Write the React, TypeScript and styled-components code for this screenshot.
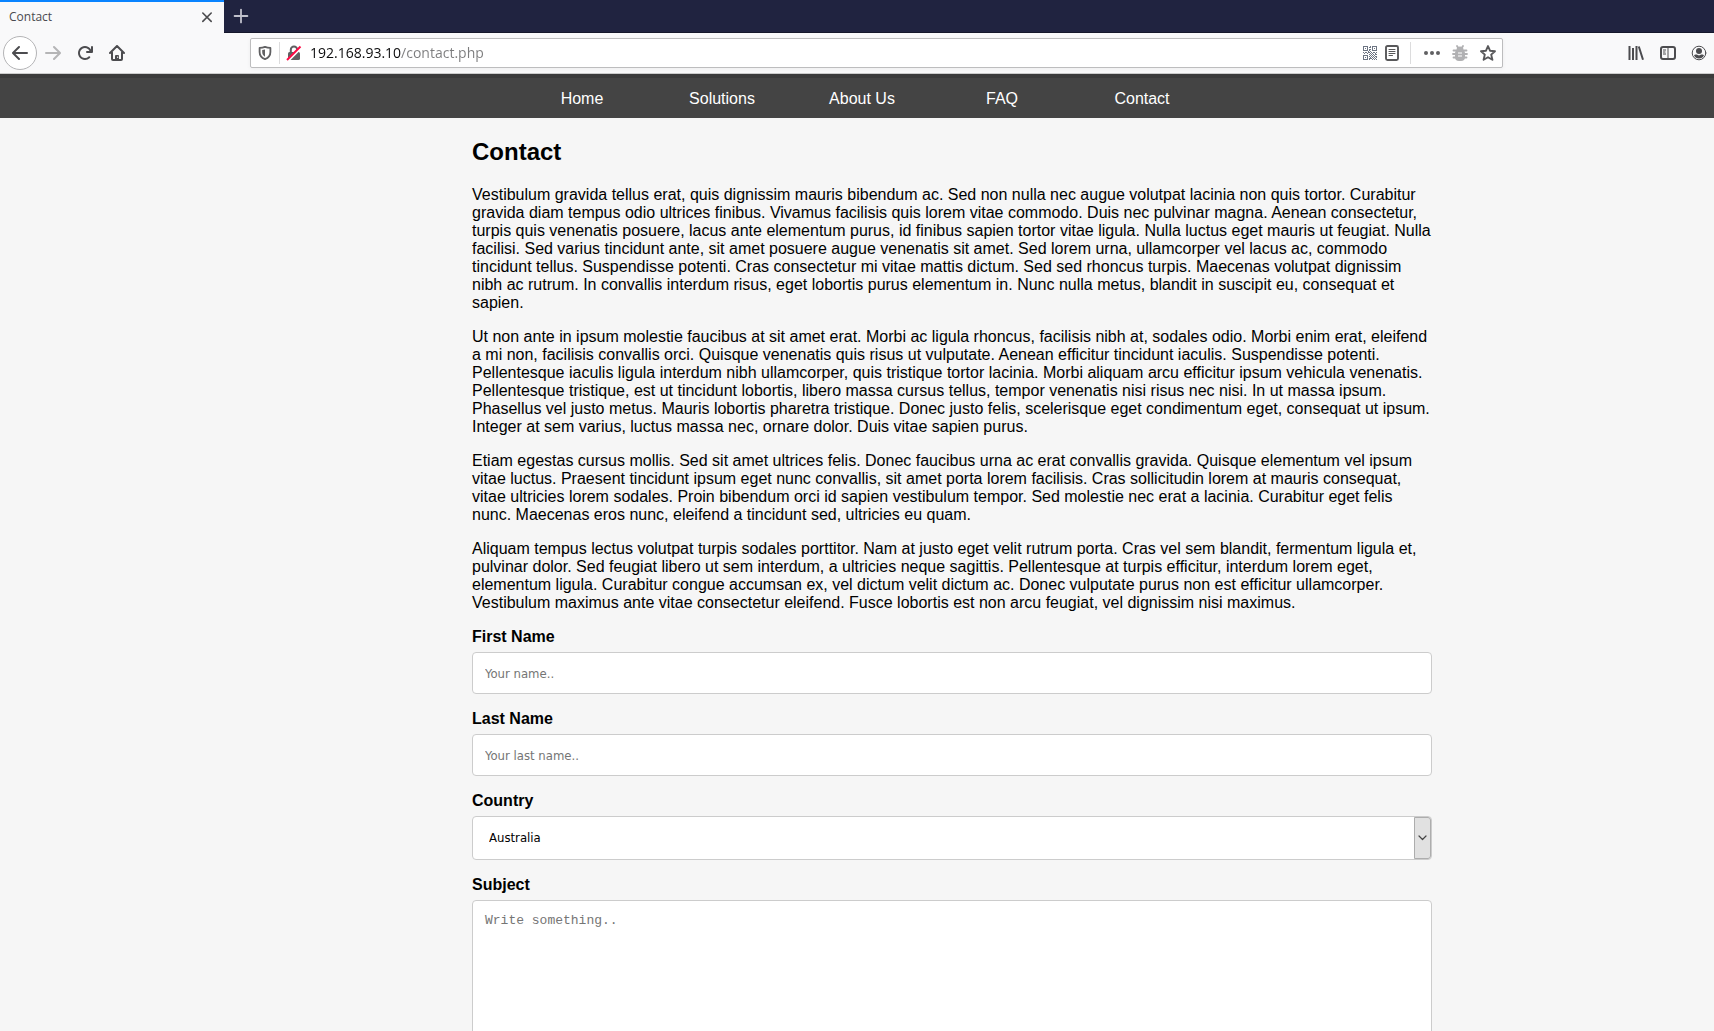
import React from "react";
import styled, { createGlobalStyle } from "styled-components";

const GlobalStyle = createGlobalStyle`
  *, *::before, *::after { box-sizing: border-box; }
  body { margin: 0; background: #f6f6f6; }
`;

const ui = `"Open Sans", "Noto Sans", sans-serif`;
const sans = `"Liberation Sans", Arial, sans-serif`;
const field = `"DejaVu Sans Condensed", "Noto Sans", sans-serif`;

const Window = styled.div`
  display: flex;
  flex-direction: column;
  height: 100vh;
  overflow: hidden;
`;

const TabStrip = styled.div`
  display: flex;
  flex: none;
  height: 33px;
  background: #202340;
  border-bottom: 1px solid #15172b;
`;

const Tab = styled.div`
  display: flex;
  align-items: center;
  justify-content: space-between;
  width: 224px;
  height: 33px;
  padding: 0 9px 2px;
  border-top: 2px solid #0a84ff;
  background: #f9f9fa;
  color: #4a4a4f;
  font: 12px/16px ${ui};
`;

const IconButton = styled.button<{ $size?: number; $color?: string }>`
  display: flex;
  align-items: center;
  justify-content: center;
  flex: none;
  width: ${(p) => p.$size ?? 32}px;
  height: ${(p) => Math.min(p.$size ?? 32, 32)}px;
  padding: 0;
  border: 0;
  background: none;
  color: ${(p) => p.$color ?? "#4c4c4f"};
`;

const BackButton = styled(IconButton)`
  width: 34px;
  height: 34px;
  border: 1px solid #b4b4b6;
  border-radius: 50%;
  background: #fff;
`;

const Toolbar = styled.div`
  display: flex;
  align-items: center;
  flex: none;
  height: 41px;
  padding: 0 0 0 3px;
  border-bottom: 1px solid #ccc;
  background: #f9f9fa;
`;

const AddressBar = styled.div`
  display: flex;
  align-items: center;
  flex: 1;
  min-width: 0;
  height: 30px;
  margin: 0 117px;
  border: 1px solid #bdbdbe;
  border-radius: 2px;
  background: #fff;
  box-shadow: 0 1px 4px rgba(0, 0, 0, 0.05);
`;

const Divider = styled.span`
  flex: none;
  width: 1px;
  height: 22px;
  background: #dcdcdd;
`;

/* The host is drawn dark and the path after it grey. */
const AddressInput = styled.input`
  flex: 1;
  min-width: 0;
  height: 28px;
  margin: 0 0 0 2px;
  padding: 0 0 2px;
  border: 0;
  outline: 0;
  color: #0c0c0d;
  font: 14px/20px ${ui};
  background: linear-gradient(90deg, #0c0c0d 91px, #7c7c7d 91px);
  background-clip: text;
  -webkit-text-fill-color: transparent;
`;

const IconGroup = styled.div<{ $pad?: number }>`
  display: flex;
  align-items: center;
  padding: 0 ${(p) => p.$pad ?? 0}px;
`;

const Viewport = styled.div`
  flex: 1;
  min-height: 0;
  overflow-y: auto;
  scrollbar-width: none;
  font: 16px/18px ${sans};
  color: #000;
`;

const Header = styled.header`
  padding-left: 190px;
  border-top: 4px solid #3b3b3b;
  background: #444;
`;

const Menu = styled.nav`
  display: flex;
  max-width: 960px;
  margin: 0 auto;
  padding-left: 40px;
`;

const MenuLink = styled.a`
  width: 140px;
  padding: 12px 0 10px;
  color: #fff;
  text-align: center;
  text-decoration: none;
`;

const Main = styled.main`
  padding-left: 190px;
`;

const Content = styled.div`
  max-width: 960px;
  margin: 0 auto;
  padding: 20px 0;
`;

const Title = styled.h2`
  margin: 0 0 20px;
  font-size: 24px;
  line-height: 28px;
`;

const Paragraph = styled.p`
  margin: 0 0 16px;
`;

const Form = styled.form`
  display: flex;
  flex-direction: column;
  gap: 16px;
`;

const Field = styled.div`
  display: flex;
  flex-direction: column;
  gap: 6px;
`;

const Label = styled.label`
  font-weight: bold;
`;

const box = `
  display: block;
  width: 100%;
  border: 1px solid #ccc;
  border-radius: 4px;
  background: #fff;
  &::placeholder { color: #757575; opacity: 1; }
`;

const TextInput = styled.input`
  ${box}
  height: 42px;
  padding: 0 12px;
  font: 13px/16px ${field};
`;

const SelectBox = styled.div`
  position: relative;
`;

const Select = styled.select`
  ${box}
  height: 44px;
  padding: 0 16px;
  color: #000;
  font: 13px/16px ${field};
  appearance: none;
`;

const SelectArrow = styled.span`
  position: absolute;
  top: 1px;
  right: 1px;
  bottom: 1px;
  display: flex;
  align-items: center;
  justify-content: center;
  width: 17px;
  border: 1px solid #adadad;
  border-radius: 0 3px 3px 0;
  background: #e1e1e1;
  pointer-events: none;
`;

const TextArea = styled.textarea`
  ${box}
  height: 200px;
  padding: 12px;
  font: 13px/15px "Liberation Mono", "Courier New", monospace;
  resize: none;
`;

const Svg = ({ size = 16, children }: { size?: number; children: React.ReactNode }) => (
  <svg width={size} height={size} viewBox="0 0 16 16" fill="currentColor" aria-hidden="true">
    {children}
  </svg>
);

const line = { fill: "none", stroke: "currentColor", strokeLinecap: "round", strokeLinejoin: "round" } as const;

const qrRows = [
  "11111001011111",
  "10001011010001",
  "10101000010101",
  "10001011010001",
  "11111010011111",
  "00000101000000",
  "10110110101101",
  "01001001010010",
  "00000010101011",
  "11111001010100",
  "10001010101011",
  "10101001010101",
  "10001011101010",
  "11111010010101",
];

const QrIcon = () => (
  <Svg>
    {qrRows.flatMap((row, y) =>
      [...row].map((c, x) => (c === "1" ? <rect key={`${x}-${y}`} x={x + 1} y={y + 1} width="1" height="1" fill="#6d7583" /> : null))
    )}
  </Svg>
);

const paragraphs = [
  "Vestibulum gravida tellus erat, quis dignissim mauris bibendum ac. Sed non nulla nec augue volutpat lacinia non quis tortor. Curabitur gravida diam tempus odio ultrices finibus. Vivamus facilisis quis lorem vitae commodo. Duis nec pulvinar magna. Aenean consectetur, turpis quis venenatis posuere, lacus ante elementum purus, id finibus sapien tortor vitae ligula. Nulla luctus eget mauris ut feugiat. Nulla facilisi. Sed varius tincidunt ante, sit amet posuere augue venenatis sit amet. Sed lorem urna, ullamcorper vel lacus ac, commodo tincidunt tellus. Suspendisse potenti. Cras consectetur mi vitae mattis dictum. Sed sed rhoncus turpis. Maecenas volutpat dignissim nibh ac rutrum. In convallis interdum risus, eget lobortis purus elementum in. Nunc nulla metus, blandit in suscipit eu, consequat et sapien.",
  "Ut non ante in ipsum molestie faucibus at sit amet erat. Morbi ac ligula rhoncus, facilisis nibh at, sodales odio. Morbi enim erat, eleifend a mi non, facilisis convallis orci. Quisque venenatis quis risus ut vulputate. Aenean efficitur tincidunt iaculis. Suspendisse potenti. Pellentesque iaculis ligula interdum nibh ullamcorper, quis tristique tortor lacinia. Morbi aliquam arcu efficitur ipsum vehicula venenatis. Pellentesque tristique, est ut tincidunt lobortis, libero massa cursus tellus, tempor venenatis nisi risus nec nisi. In ut massa ipsum. Phasellus vel justo metus. Mauris lobortis pharetra tristique. Donec justo felis, scelerisque eget condimentum eget, consequat ut ipsum. Integer at sem varius, luctus massa nec, ornare dolor. Duis vitae sapien purus.",
  "Etiam egestas cursus mollis. Sed sit amet ultrices felis. Donec faucibus urna ac erat convallis gravida. Quisque elementum vel ipsum vitae luctus. Praesent tincidunt ipsum eget nunc convallis, sit amet porta lorem facilisis. Cras sollicitudin lorem at mauris consequat, vitae ultricies lorem sodales. Proin bibendum orci id sapien vestibulum tempor. Sed molestie nec erat a lacinia. Curabitur eget felis nunc. Maecenas eros nunc, eleifend a tincidunt sed, ultricies eu quam.",
  "Aliquam tempus lectus volutpat turpis sodales porttitor. Nam at justo eget velit rutrum porta. Cras vel sem blandit, fermentum ligula et, pulvinar dolor. Sed feugiat libero ut sem interdum, a ultricies neque sagittis. Pellentesque at turpis efficitur, interdum lorem eget, elementum ligula. Curabitur congue accumsan ex, vel dictum velit dictum ac. Donec vulputate purus non est efficitur ullamcorper. Vestibulum maximus ante vitae consectetur eleifend. Fusce lobortis est non arcu feugiat, vel dignissim nisi maximus.",
];

const BrowserTabs = () => (
  <TabStrip>
    <Tab>
      Contact
      <IconButton $size={16} aria-label="Close tab">
        <Svg><path {...line} strokeWidth="1.6" d="M3.8 4l8.4 8.4M12.2 4l-8.4 8.4" /></Svg>
      </IconButton>
    </Tab>
    <IconButton $color="#c0c1cc" $size={34} aria-label="New tab">
      <Svg><path {...line} strokeWidth="1.8" d="M8 1.6v12.8M1.6 8h12.8" /></Svg>
    </IconButton>
  </TabStrip>
);

const BrowserToolbar = () => (
  <Toolbar>
    <BackButton aria-label="Back">
      <Svg><path d="M15 7H3.414l4.293-4.293a1 1 0 0 0-1.414-1.414l-6 6a1 1 0 0 0 0 1.414l6 6a1 1 0 0 0 1.414-1.414L3.414 9H15a1 1 0 0 0 0-2z" /></Svg>
    </BackButton>
    <IconButton $color="#b5b5b6" aria-label="Forward">
      <Svg><path d="M15.707 7.293l-6-6a1 1 0 0 0-1.414 1.414L12.586 7H1a1 1 0 0 0 0 2h11.586l-4.293 4.293a1 1 0 1 0 1.414 1.414l6-6a1 1 0 0 0 0-1.414z" /></Svg>
    </IconButton>
    <IconButton aria-label="Reload">
      <Svg><path d="M15 1a1 1 0 0 0-1 1v2.418A6.995 6.995 0 1 0 8 15a6.954 6.954 0 0 0 4.95-2.05 1 1 0 0 0-1.414-1.414A5.019 5.019 0 1 1 12.549 6H10a1 1 0 0 0 0 2h5a1 1 0 0 0 1-1V2a1 1 0 0 0-1-1z" /></Svg>
    </IconButton>
    <IconButton aria-label="Home">
      <Svg>
        <path {...line} strokeWidth="2" d="M1 8l7-7 7 7M3 7.5V14a1 1 0 0 0 1 1h8a1 1 0 0 0 1-1V7.500" />
        <path d="M6 15v-4a1 1 0 0 1 1-1h2a1 1 0 0 1 1 1v4z" />
        <rect x="8.200" y="11.500" width="1" height="1.500" fill="#f9f9fa" />
      </Svg>
    </IconButton>

    <AddressBar>
      <IconButton $size={28} $color="#606062" aria-label="Tracking protection">
        <Svg>
          <path {...line} strokeWidth="1.8" d="M8 1.900c2 .8 4 1 5.400 1v4.100c0 3.600-2.400 6-5.400 7.200C5 13 2.600 10.600 2.600 7V2.900c1.400 0 3.400-.2 5.400-1z" />
          <path d="M8 4.500v7.200C6.200 10.700 5.200 9 5.200 7V5c1 0 1.800-.2 2.800-.5z" />
        </Svg>
      </IconButton>
      <Divider />
      <IconButton $size={28} $color="#606062" aria-label="Connection is not secure">
        <Svg>
          <path {...line} strokeWidth="2" d="M4.800 8V4.800a3.200 3.200 0 0 1 6.400 0V8" />
          <rect x="2" y="7" width="12" height="8" rx="1.500" />
          <path d="M1.500 16L15.500 2" stroke="#fff" strokeWidth="3" />
          <path d="M1 15L14.500 1.500" stroke="#ff0a45" strokeWidth="2" />
        </Svg>
      </IconButton>
      <AddressInput aria-label="Address" defaultValue="192.168.93.10/contact.php" />
      <IconButton $size={22} aria-label="QR code"><QrIcon /></IconButton>
      <IconButton $size={22} $color="#58585a" aria-label="Reader view">
        <Svg>
          <rect {...line} strokeWidth="1.900" x="2" y="1" width="12" height="14" rx="1.500" />
          <path {...line} strokeWidth="1" d="M5 4.500h6M5 6.500h6M5 8.500h6M5 10.500h3.500" />
        </Svg>
      </IconButton>
      <IconGroup $pad={7}><Divider /></IconGroup>
      <IconGroup>
        <IconButton $size={28} $color="#606062" aria-label="Page actions">
          <Svg>
            <circle cx="2" cy="8" r="2" />
            <circle cx="8" cy="8" r="2" />
            <circle cx="14" cy="8" r="2" />
          </Svg>
        </IconButton>
        <IconButton $size={28} $color="#b1b1b3" aria-label="Debug">
          <Svg>
            <path {...line} strokeWidth="1.800" d="M5 1l1.500 2.500M11 1L9.500 3.500M1.500 5.500H14.500M1 9h14M1.500 12.500h13" />
            <path d="M4.500 5a3.500 3.500 0 0 1 7 0z" />
            <rect x="3" y="4.500" width="10" height="11.500" rx="4" />
            <path d="M6 8h4M6 11h4" stroke="#fff" strokeWidth="1.200" />
          </Svg>
        </IconButton>
        <IconButton $size={28} $color="#58585a" aria-label="Bookmark this page">
          <Svg><path {...line} strokeWidth="1.900" d="M8 1l2 4.700 5 .5-3.800 3.400 1.200 5.200L8 12.200l-4.400 2.600 1.200-5.200L1 6.200l5-.5z" /></Svg>
        </IconButton>
      </IconGroup>
    </AddressBar>

    <IconGroup>
      <IconButton aria-label="Library">
        <Svg><path {...line} strokeLinecap="butt" strokeWidth="2" d="M1.500 1v14M5 3v12M8.500 1v14M10.800 1.500L15 14.800" /></Svg>
      </IconButton>
      <IconButton aria-label="Sidebars">
        <Svg>
          <rect {...line} strokeWidth="2" x="1" y="2" width="14" height="12" rx="2" />
          <path {...line} strokeWidth="1" strokeLinecap="butt" d="M8 2v12M3 5h3M3 7h2.500M3 9h3" />
        </Svg>
      </IconButton>
      <IconButton $size={30} aria-label="Account">
        <Svg>
          <circle {...line} strokeWidth="1" cx="8" cy="8" r="6.800" />
          <circle cx="8" cy="6" r="3" />
          <path d="M3 10.200c1.200-.6 2-.6 2.700-.6a4 4 0 0 0 4.600 0c.7 0 1.500 0 2.700.6a5.500 5.500 0 0 1-10 0z" />
        </Svg>
      </IconButton>
    </IconGroup>
  </Toolbar>
);

export default function App() {
  return (
    <Window>
      <GlobalStyle />
      <BrowserTabs />
      <BrowserToolbar />
      <Viewport>
        <Header>
          <Menu>
            {["Home", "Solutions", "About Us", "FAQ", "Contact"].map((item) => (
              <MenuLink key={item} href="#">{item}</MenuLink>
            ))}
          </Menu>
        </Header>
        <Main>
          <Content>
            <Title>Contact</Title>
            {paragraphs.map((text) => (
              <Paragraph key={text}>{text}</Paragraph>
            ))}
            <Form>
              <Field>
                <Label htmlFor="fname">First Name</Label>
                <TextInput id="fname" placeholder="Your name.." />
              </Field>
              <Field>
                <Label htmlFor="lname">Last Name</Label>
                <TextInput id="lname" placeholder="Your last name.." />
              </Field>
              <Field>
                <Label htmlFor="country">Country</Label>
                <SelectBox>
                  <Select id="country" defaultValue="Australia">
                    <option>Australia</option>
                  </Select>
                  <SelectArrow aria-hidden="true">
                    <svg width="9" height="6" viewBox="0 0 9 6"><path {...line} color="#444" strokeWidth="1.200" d="M1 1l3.500 3.500L8 1" /></svg>
                  </SelectArrow>
                </SelectBox>
              </Field>
              <Field>
                <Label htmlFor="subject">Subject</Label>
                <TextArea id="subject" placeholder="Write something.." />
              </Field>
            </Form>
          </Content>
        </Main>
      </Viewport>
    </Window>
  );
}
